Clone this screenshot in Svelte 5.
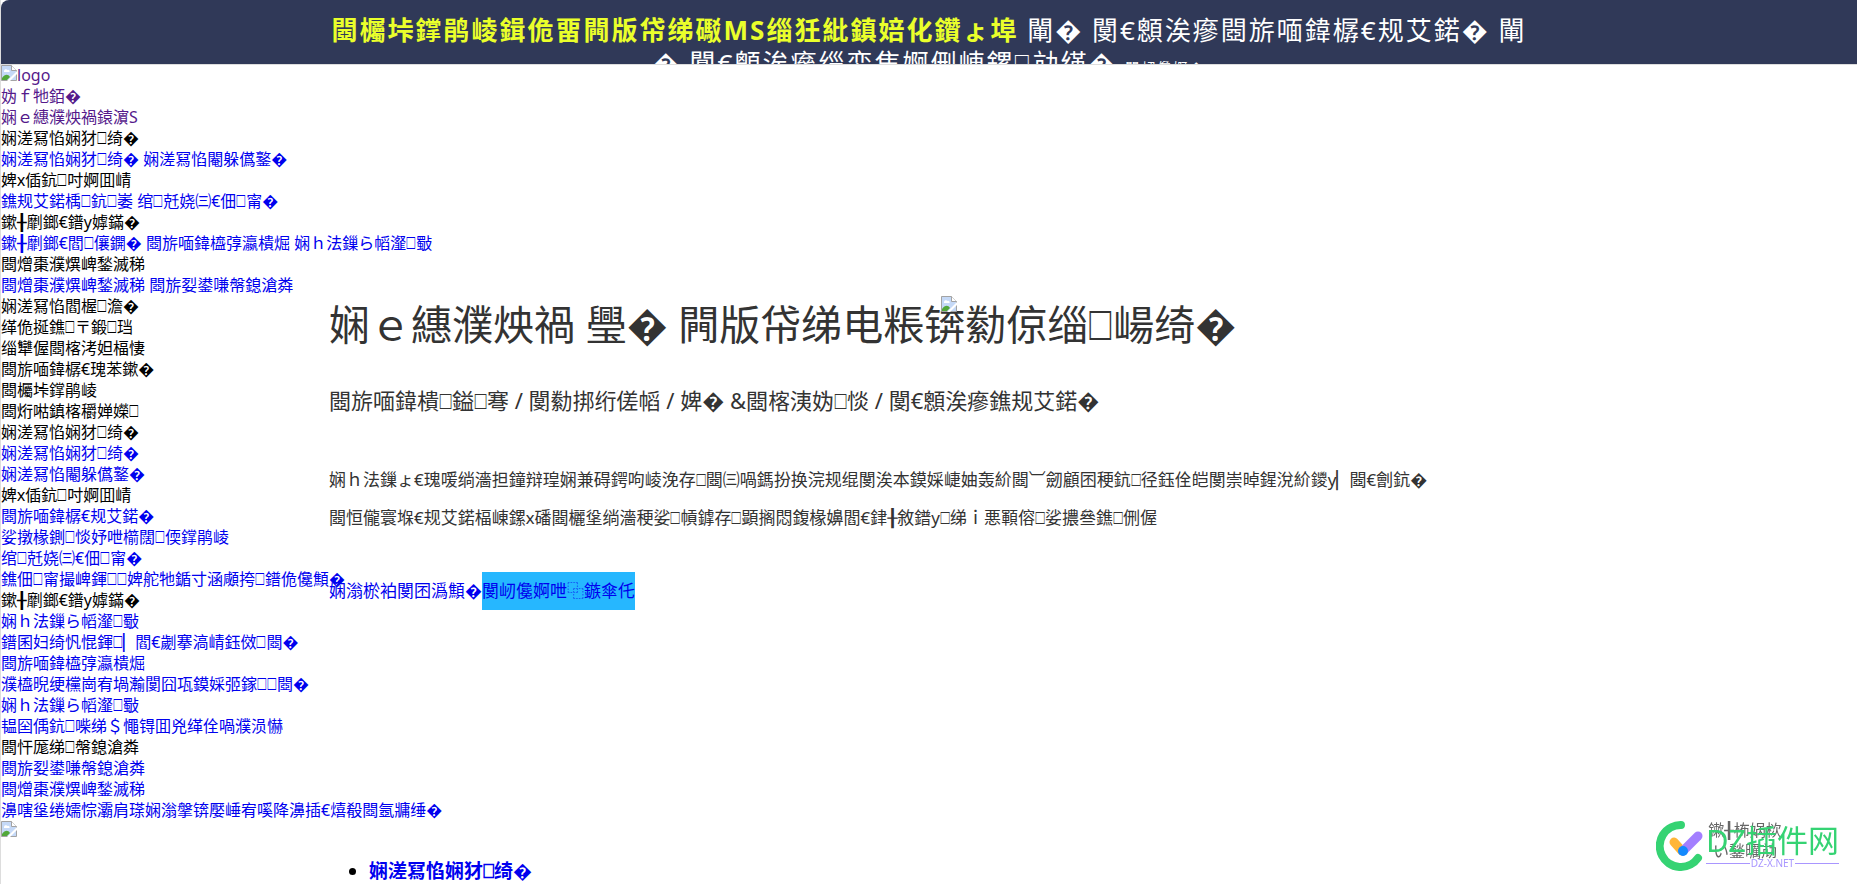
<script>
  const nav = [
    { links: ['娴溠冩惂娴犲⎕绮�', '娴溠冩惂閹躲儰鐜�'], title: '娴溠冩惂娴犲⎕绮�' },
    { links: ['鐎规艾鍩楀⎕鈧⎕崣', '绾⎕兛娆㈢€佃⎕甯�'], title: '婢х偛鈧⎕吋婀囬崝' },
    { links: ['鏉╂劘鎯€閻⎕儴鐦�', '閸旂喕鍏橀弴瀛樻煀', '娴ｈ法鏁ら幍瀣⎕斀'], title: '鏉╂劘鎯€鐠у嫭鏋�' },
    { links: ['閸熷棗濮熼崥鍫滅稊', '閸旂姴鍙嗛幋鎴滄粦'], title: '閸熷棗濮熼崥鍫滅稊' },
  ];

  const features = [
    '娴溠冩惂閻楃⎕澹�',
    '缂佹挻鐎⎕〒鍛⎕珰',
    '缁犫偓閸楁洘妲楅悽',
    '閸旂喕鍏樼€瑰苯鏉�',
    '閸欘垰鐣鹃崚',
    '閸烆喖鎮楁穱婵嬫⎕',
  ];

  const groups = [
    { title: '娴溠冩惂娴犲⎕绮�', links: ['娴溠冩惂娴犲⎕绮�', '娴溠冩惂閹躲儰鐜�'] },
    {
      title: '婢х偛鈧⎕吋婀囬崝',
      links: [
        '閸旂喕鍏樼€规艾鍩�',
        '娑撴椽鍘⎕惔妤呭櫤闊⎕偄鐣鹃崚',
        '绾⎕兛娆㈢€佃⎕甯�',
        '鐎佃⎕甯撮崥鍕⎕⎕婢舵牠鍎寸涵顑挎⎕鐠佹儳顦�',
      ],
    },
    {
      title: '鏉╂劘鎯€鐠у嫭鏋�',
      links: [
        '娴ｈ法鏁ら幍瀣⎕斀',
        '鐠囷妇绮忛惃鍕⎕▏閻€劌搴滈崝鈺傚⎕閸�',
        '閸旂喕鍏橀弴瀛樻煀',
        '濮橀晲绠欓崗宥堝瀭閺囧瓨鏌婇弬鎵⎕⎕閸�',
        '娴ｈ法鏁ら幍瀣⎕斀',
        '韫囶偊鈧⎕喍绨＄憴锝囬兇缂佺喎濮涢懗',
      ],
    },
    {
      title: '閸忓厖绨⎕幋鎴滄粦',
      links: [
        '閸旂姴鍙嗛幋鎴滄粦',
        '閸熷棗濮熼崥鍫滅稊',
        '濞嗐垼绻嬬悰灞肩瑹娴滃搫锛嬮崜宥嗘降濞插€熺殽閸氬牅缍�',
      ],
    },
  ];
</script>

{#snippet broken()}
  <svg class="broken" width="16" height="16" viewBox="0 0 16 16" aria-hidden="true">
    <path d="M0.5 0.5h10l5 5v10H0.5z" fill="#c5d9f7" stroke="#a3a3a3" />
    <path d="M10.5 0.5v5h5" fill="#fff" stroke="#a3a3a3" />
    <path d="M3 6a2 2 0 0 1 3.500-1 1.500 1.500 0 0 1 2 2H3z" fill="#fff" />
    <path d="M1 15v-2c3-4 6-4 8-1l-3 3z" fill="#52a83a" />
    <path d="M16 6L6 16h3l7-7z" fill="#fff" />
  </svg>
{/snippet}

<div class="page">
  <a class="banner" href="#promo">
    <span class="banner-text">
      <strong>閸欘垰鐣鹃崚鍓佹畱闁版帒绨礟MS缁狅紕鎮婄化鑽ょ埠</strong> 閳� 閺€顖涘瘮閸旂喕鍏樼€规艾鍩� 閳<br />� 閺€顖涘瘮缁変焦婀侀崠鏍⎕劥缂� <small>閺屻儳婀�</small>
    </span>
  </a>

  <div class="body">
    <nav>
      <div><a class="seen" href="#home">{@render broken()}logo</a></div>
      <div><a class="seen" href="#home">妫ｆ牠銆�</a></div>
      <div><a class="seen" href="#pms">娴ｅ繐濮炴禍鎱濵S</a></div>
      {#each nav as item}
        <div>{item.title}</div>
        <div>
          {#each item.links as link, i}{i ? ' ' : ''}<a href="#nav">{link}</a>{/each}
        </div>
      {/each}
      {#each features as feature}
        <div>{feature}</div>
      {/each}
      {#each groups as group}
        <div>{group.title}</div>
        {#each group.links as link}
          <div><a href="#sub">{link}</a></div>
        {/each}
      {/each}
    </nav>

    <main>
      <div class="title">
        <h1>娴ｅ繐濮炴禍 璺� 闁版帒绨电粻锛勬倞缁⎕崵绮�</h1>
        <span class="slide">{@render broken()}</span>
      </div>
      <h2>閸旂喕鍏樻⎕鎰⎕弿 / 閺勬挷绗傞幍 / 婢� &amp;閸楁洟妫⎕惔 / 閺€顖涘瘮鐎规艾鍩�</h2>
      <p>
        娴ｈ法鏁ょ€瑰喛绱濇担鐘辩瑝娴兼碍鍔呴崚浼存⎕閸㈢喎鎷扮换浣规绲閺涘本鏌婇崨妯轰紒閸︺劒顧囨稉鈧⎕径鈺佺皑閺崇晫鍟涗紒鑁у▏閸€劊鈧�<br />
        閸恒儱寰堢€规艾鍩楅崠鏍х磻閸欐垼绱濇稉娑⎕幊鎼存⎕顕搁悶鍑椽嬶閻€銉╂敘鐠у⎕绨ｉ悪顐傛⎕娑擃叄鐎⎕侀偓
      </p>
      <div class="actions">
        <a href="#more">娴滃棜袙閺囨潙顦�</a><a class="demo" href="#demo">閺屻儳婀呭⿻鏃傘仛</a>
      </div>
    </main>
  </div>

  <div>{@render broken()}</div>

  <ul>
    <li><a href="#intro">娴溠冩惂娴犲⎕绮�</a></li>
  </ul>
</div>

<button class="totop">鏉╂柨娲栨い鍫曞劥</button>

<div class="mark">
  <svg width="50" height="50" viewBox="0 0 50 50" aria-hidden="true">
    <path d="M25 4A21 21 0 1 0 42 37" fill="none" stroke="#35d373" stroke-width="8" stroke-linecap="round" />
    <path d="M18 21l8 9" stroke="#ffb638" stroke-width="9" stroke-linecap="round" />
    <path d="M27 30l15-15" stroke="#a37fff" stroke-width="9" stroke-linecap="round" />
    <circle cx="27" cy="30" r="5" fill="#1389fd" />
  </svg>
  <div class="mark-text">
    <span class="mark-name">DZ插件网</span>
    <span class="mark-site">DZ-X.NET</span>
  </div>
</div>

<style>
  :global(body) {
    background: #fff;
  }

  .page,
  .totop,
  .mark {
    font-family: 'Noto Sans', 'DejaVu Sans', 'Noto Sans CJK SC', sans-serif;
  }

  .page {
    font-size: 16px;
    line-height: 21px;
    color: #000;
    border-left: 1px solid #ddd;
    overflow: hidden;
  }

  a {
    color: #00e;
    text-decoration: none;
  }

  .seen {
    color: #551a8b;
  }

  .broken {
    vertical-align: top;
  }

  /* banner */
  .banner {
    display: flex;
    justify-content: center;
    height: 64px;
    overflow: hidden;
    background: #303958;
    border-bottom: 1px solid #ddd;
    border-top-left-radius: 8px;
    color: #fff;
  }

  .banner-text {
    padding-top: 14px;
    font-size: 26px;
    line-height: 33px;
    letter-spacing: 2px;
    text-align: center;
    white-space: nowrap;
  }

  .banner strong {
    color: #eaff2b;
  }

  .banner small {
    font-size: 14px;
  }

  /* menu and slide */
  .body {
    display: grid;
    grid-template-columns: minmax(0, 1fr) minmax(0, 1200px) minmax(0, 1fr);
  }

  nav {
    white-space: nowrap;
  }

  main {
    padding-top: 231px;
    color: #333;
  }

  .title {
    position: relative;
  }

  .slide {
    position: absolute;
    top: 0;
    left: 51%;
  }

  h1 {
    margin: 0;
    font-size: 41px;
    font-weight: 400;
    line-height: 56px;
    white-space: nowrap;
  }

  h2 {
    margin: 33px 0 0;
    font-size: 22px;
    font-weight: 400;
    line-height: 30px;
  }

  p {
    margin: 46px 0 35px;
    font-size: 17px;
    line-height: 38px;
    white-space: nowrap;
  }

  .actions {
    display: flex;
    font-size: 17px;
    line-height: 38px;
  }

  .demo {
    background: #26b7ff;
  }

  ul {
    box-sizing: border-box;
    max-width: 1200px;
    margin: 16px auto 0;
    padding-left: 40px;
    font-size: 19px;
    font-weight: 700;
    line-height: 26px;
  }

  /* floating items */
  .totop {
    position: fixed;
    right: 72px;
    bottom: 24px;
    width: 80px;
    padding: 0;
    border: 0;
    background: none;
    color: #666;
    font-size: 16px;
    line-height: 21px;
  }

  .mark {
    position: fixed;
    right: 18px;
    bottom: 15px;
    display: flex;
    align-items: center;
  }

  .mark-text {
    display: flex;
    flex-direction: column;
  }

  .mark-name {
    color: #35d373;
    font-size: 31px;
    line-height: 34px;
  }

  .mark-site {
    display: flex;
    align-items: center;
    gap: 1px;
    color: #a996ff;
    font-size: 10px;
    line-height: 12px;
  }

  .mark-site::before,
  .mark-site::after {
    content: '';
    flex: 1;
    height: 1px;
    background: #a996ff;
  }
</style>
